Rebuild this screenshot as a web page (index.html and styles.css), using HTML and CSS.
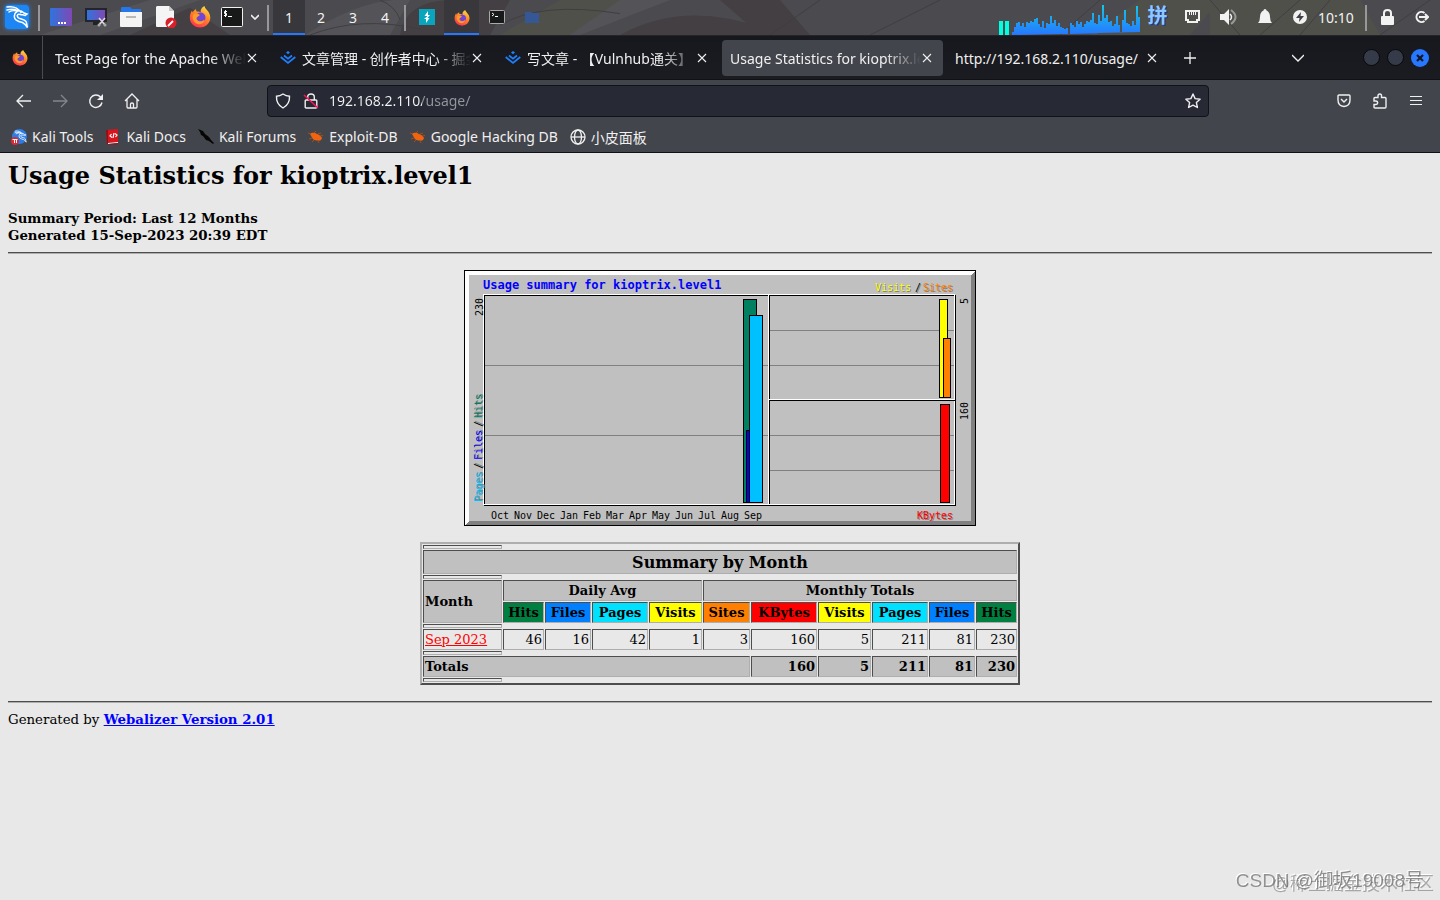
FILE: index.html
```html
<!DOCTYPE html>
<html lang="en">
<head>
<meta charset="utf-8">
<title>Usage Statistics for kioptrix.level1</title>
<link rel="stylesheet" href="styles.css">
</head>
<body>
<svg class="defs" aria-hidden="true">
  <defs>
    <linearGradient id="screen" x1="0" y1="0" x2="1" y2="0"><stop offset="0" stop-color="#2f74dc"/><stop offset="1" stop-color="#8048b4"/></linearGradient>
    <linearGradient id="flame" x1=".8" y1="0" x2=".3" y2="1"><stop offset="0" stop-color="#ffe04a"/><stop offset=".45" stop-color="#ff8a25"/><stop offset="1" stop-color="#ff2f55"/></linearGradient>
    <linearGradient id="load" x1="0" y1="0" x2="0" y2="1"><stop offset="0" stop-color="#14c8e8"/><stop offset="1" stop-color="#2777ff"/></linearGradient>
    <symbol id="firefox" viewBox="0 0 22 22">
      <path fill="url(#flame)" d="M11 21.500C5 21.500.8 17 .8 11.500c0-3 1-5 2.200-7l.6 2c.8-1.500 2-2.600 3.500-3.500-.2 1 0 2 .7 2.600 2 0 3 .4 4 1C11 4 12.500 1.500 15.500 0c0 3 5.700 5 5.800 11.500C21.300 17 17 21.500 11 21.500z"/>
      <circle cx="11.500" cy="11.500" r="5" fill="#7245d8"/>
      <path fill="#ff9b28" d="M4 9c2-2 5-1.500 7 0l-2 1.500c-1 .5-1.500 1-1.500 2.500 1.500 3 6 3 8 .5C15 18 10 19.500 6.500 17 4 15 3 12 4 9z"/>
    </symbol>
    <symbol id="dragon" viewBox="0 0 24 24">
      <path fill="none" stroke="#fff" stroke-width="1.500" stroke-linecap="round" d="M2 2c6-1 11 1 14 5.500M4 7c3-2 6-2 9-.5M2 5c4-1 7-1 10 .5M12 6c2-.5 5 0 7 2l3 1-2 1.500C18 9 17 10 15.500 9.500c-3-1-4 1-2.500 3 2 2 6 1 8 4 1 2 .5 3 1.500 6-2-3-3-4-5-5-5-1-9-3-8-7 0-1.500 1-3 2-3.500"/>
    </symbol>
    <symbol id="juejin" viewBox="0 0 16 14"><path fill="none" stroke="#1e80ff" stroke-width="1.700" d="M.7 6 8 12l7.300-6M4 4.500 8 7.700l4-3.200"/><path fill="#1e80ff" d="m8 0 2 1.600L8 3.300 6 1.600z"/></symbol>
    <symbol id="close" viewBox="0 0 10 10"><path stroke="#f0f0f0" stroke-width="1.100" d="m1 1 8 8m0-8-8 8"/></symbol>
    <symbol id="bug" viewBox="0 0 16 16"><path fill="#f0640f" d="M2 5c2-2 5-1.500 7 0 2 .5 4 2 5 4-.5 2-2 3-4 2.500-3 .5-5-1-6-3z"/><path fill="none" stroke="#b9500f" stroke-width=".8" d="m6 4 2-2m2 3 3-1m-1 3 3-.5M4 9l-3 1m5 1-2 2m6-1 1 2M3 5 0 4"/></symbol>
  </defs>
</svg>

<header class="panel">
  <svg class="wallpaper" viewBox="0 0 1440 36" preserveAspectRatio="none" aria-hidden="true">
    <g fill="#5c5b60"><path d="M40 36 150 0h50L100 36zM305 36q60-40 105-36l-20 36zM520 36l60-36h90l-90 36z"/></g>
    <g fill="#3d3739"><path d="M130 36 190 8l40 28zM400 36q5-35 50-36h60l-20 36zM620 36q70-40 160 0zM720 0h60l30 36h-50z"/></g>
    <g fill="#55554a"><path d="M500 36 560 0h60l-50 36zM1090 36l50-36h80l-30 36zM1210 36V0h150l20 36z"/></g>
    <g fill="none" stroke="#37343a"><path d="M310 36q50-20 110-6M380 0q15 6 20 20M500 26q40-25 120-12M820 0l-50 36M870 36l70-36M1060 36l40-36M1210 0l30 36M1260 36l40-36M1330 0l-30 36M1380 36l50-36"/></g>
  </svg>
  <div class="group">
    <button class="slot kali" aria-label="Applications"><svg width="24" height="24"><rect width="24" height="24" rx="2" fill="#1d86f5"/><use href="#dragon" width="24" height="24"/></svg></button>
    <i class="sep"></i>
    <button class="slot" aria-label="Show desktop"><svg width="22" height="18"><rect width="22" height="18" rx="1" fill="url(#screen)"/><path stroke="#fff" stroke-width="2" stroke-dasharray="2 1" d="M8 15h8"/></svg></button>
    <button class="slot" aria-label="Screenshot"><svg width="22" height="20"><rect width="22" height="14" y="1" fill="#24242c"/><rect x="2" y="3" width="18" height="10" fill="url(#screen)"/><path fill="#222" d="M8 15h6v3H8z"/><path stroke="#ddd" stroke-width="1.500" d="m14 11 6 7m0-7-6 7"/><circle cx="14" cy="18" r="1.500" fill="#aaa"/><circle cx="20" cy="18" r="1.500" fill="#aaa"/></svg></button>
    <button class="slot" aria-label="Files"><svg width="22" height="20"><path fill="#2677ea" d="M1 1q0-1 1-1h8l2 2h9v6H1z"/><path fill="#f4f4f4" d="M0 5h22v14q0 1-1 1H1q-1 0-1-1z"/><rect x="6" y="9" width="10" height="2" fill="#b8b8b8"/></svg></button>
    <button class="slot" aria-label="Text editor"><svg width="22" height="22"><path fill="#f5f5f5" d="M2 0h12l5 5v16H2q-1 0-1-1V1z"/><path fill="#c9c9c9" d="M14 0v5h5z"/><circle cx="16" cy="17" r="5.500" fill="#d8202a"/><path stroke="#fff" stroke-width="1.800" d="m13 20 5-5"/></svg></button>
    <button class="slot ff" aria-label="Firefox"><svg width="22" height="22"><use href="#firefox" width="22" height="22"/></svg></button>
    <button class="slot term" aria-label="Terminal"><svg width="22" height="20"><rect x=".5" y=".5" width="21" height="19" rx="1" fill="#171a19" stroke="#f1f1f1"/><path fill="none" stroke="#fff" d="M6 4.500H3.500v2h2v2H3M4.500 3v7M7 9.500h4"/></svg></button>
    <button class="slot more" aria-label="More"><svg width="8" height="6"><path fill="none" stroke="#eee" stroke-width="1.700" d="m0 1 4 4 4-4"/></svg></button>
    <i class="sep sep-wide"></i>
    <button class="space active">1</button><button class="space">2</button><button class="space">3</button><button class="space">4</button>
    <i class="sep sep-thin"></i>
    <button class="slot" aria-label="Burp Suite"><svg width="16" height="16"><path fill="#08a5bd" d="M0 0h16v16H0z"/><path fill="#fff" d="M9 2v4h2L8 9.500V7H5.500zM7 14v-4H5l3-2.500V9h2.500z"/></svg></button>
    <button class="slot active" aria-label="Firefox window"><svg width="16" height="16"><use href="#firefox" width="16" height="16"/></svg></button>
    <button class="slot" aria-label="Terminal window"><svg width="16" height="14"><rect x=".5" y=".5" width="15" height="13" rx="1" fill="#171a19" stroke="#aaa"/><path stroke="#fff" d="m3 3 2 1.500L3 6m3 .5h3"/></svg></button>
    <button class="slot" aria-label="Files window"><svg width="14" height="11"><path fill="#355796" d="M0 0h6l1 1h7v10H0z"/></svg></button>
  </div>
  <div class="group tray">
    <svg class="graph" width="141" height="36" aria-label="CPU load"><path fill="#00ffe1" d="M0 21h4v14H0zM6 21h4v14H6z"/><path fill="url(#load)" d="M13 35v-3h2v-5h2v-4h2v-1h2v4h2v-3h2v4h2v-5h2v1h2v-2h2v1h2v-3h2v-1h2v6h2v3h2v-6h2v7h2v-5h2v1h2v-8h2v7h2v-3h2v6h2v-3h2v4h2v1h2v1h2v-1h2v6h2v-11h2v2h2v2h2v-6h2v3h2v-2h2v5h2v-3h2v-3h2v1h2v-2h2v-7h2v10h2v1h2v-9h2v6h2v-16h2v13h2v-3h2v7h2v-1h2v5h2v-2h2v-8h2v9h2v7h2v-12h2v-10h2v13h2v1h2v2h2v-5h2v4h2v-19h2v11h2v-4h2v5h2v-2h1v16z"/></svg>
    <button class="slot ime">拼</button>
    <button class="slot" aria-label="Network"><svg width="15" height="14"><path fill="none" stroke="#f2f2f2" stroke-width="2" d="M1 1h13v9h-2v2H3v-2H1z"/><path stroke="#f2f2f2" d="M4.500 2v3m2-3v3m2-3v3m2-3v3"/></svg></button>
    <button class="slot vol" aria-label="Volume"><svg width="18" height="16"><path fill="#f2f2f2" d="M0 5h4l5-5v16l-5-5H0z"/><path fill="none" stroke="#f2f2f2" stroke-width="1.500" d="M10 5q3 3 0 6"/><path fill="none" stroke="#999" stroke-width="2" d="M11 1q9 7 0 14"/></svg></button>
    <button class="slot" aria-label="Notifications"><svg width="14" height="16"><path fill="#f2f2f2" d="M7 0q1.500 0 1.500 1.500Q12 3 12 8q0 4 2 6H0q2-2 2-6 0-5 3.500-6.500Q5.500 0 7 0z"/></svg></button>
    <button class="slot power" aria-label="Power"><svg width="14" height="14"><circle cx="7" cy="7" r="7" fill="#f2f2f2"/><path fill="#414044" d="M8 2 3 8h3.500L6 12l5-6H7.500z"/></svg></button>
    <time class="clock">10:10</time>
    <i class="sep sep-clock"></i>
    <button class="slot lock" aria-label="Lock"><svg width="13" height="16"><path fill="none" stroke="#f2f2f2" stroke-width="2" d="M3 8V4q0-3 3.500-3T10 4v4"/><rect y="7" width="13" height="9" rx="1" fill="#f2f2f2"/></svg></button>
    <button class="slot" aria-label="Log out"><svg width="15" height="14"><path fill="none" stroke="#f2f2f2" stroke-width="2" d="M10.500 3A5 5 0 1 0 10.500 11M5 7h8M11 4l3 3-3 3"/></svg></button>
  </div>
</header>

<nav class="tabs" aria-label="Tabs">
  <button class="pinned" aria-label="Pinned tab"><svg width="16" height="16"><use href="#firefox" width="16" height="16"/></svg></button>
  <div class="tab"><span class="tab-title">Test Page for the Apache Web Server</span><button aria-label="Close"><svg width="10" height="10"><use href="#close"/></svg></button></div>
  <div class="tab"><svg width="16" height="14"><use href="#juejin"/></svg><span class="tab-title">文章管理 - 创作者中心 - 掘金</span><button aria-label="Close"><svg width="10" height="10"><use href="#close"/></svg></button></div>
  <div class="tab"><svg width="16" height="14"><use href="#juejin"/></svg><span class="tab-title">写文章 - 【Vulnhub通关】</span><button aria-label="Close"><svg width="10" height="10"><use href="#close"/></svg></button></div>
  <div class="tab current"><span class="tab-title">Usage Statistics for kioptrix.level1</span><button aria-label="Close"><svg width="10" height="10"><use href="#close"/></svg></button></div>
  <div class="tab"><span class="tab-title whole">http://192.168.2.110/usage/</span><button aria-label="Close"><svg width="10" height="10"><use href="#close"/></svg></button></div>
  <button class="plus" aria-label="New tab"><svg width="12" height="12"><path stroke="#f0f0f0" stroke-width="1.300" d="M6 0v12M0 6h12"/></svg></button>
  <button class="list" aria-label="List all tabs"><svg width="12" height="8"><path fill="none" stroke="#f0f0f0" stroke-width="1.300" d="m0 1 6 6 6-6"/></svg></button>
  <div class="window">
    <button aria-label="Minimize"></button><button aria-label="Maximize"></button><button class="shut" aria-label="Close window"><svg width="8" height="8"><path stroke="#101722" stroke-width="2.200" d="m1 1 6 6m0-6-6 6"/></svg></button>
  </div>
</nav>

<div class="toolbar">
  <button aria-label="Back"><svg width="16" height="14"><path fill="none" stroke="#f0f0f0" stroke-width="1.300" d="M15 7H1m6-6L1 7l6 6"/></svg></button>
  <button aria-label="Forward"><svg width="16" height="14"><path fill="none" stroke="#85868b" stroke-width="1.300" d="M1 7h14M9 1l6 6-6 6"/></svg></button>
  <button aria-label="Reload"><svg width="16" height="16"><path fill="none" stroke="#f0f0f0" stroke-width="1.400" d="M14 9.500A6.200 6.200 0 1 1 12.500 4"/><path fill="#f0f0f0" d="M15 1v6H9z"/></svg></button>
  <button aria-label="Home"><svg width="16" height="16"><path fill="none" stroke="#f0f0f0" stroke-width="1.300" d="M1 8l7-7 7 7M3 6.500V14q0 1 1 1h8q1 0 1-1V6.500M6.500 15v-4q0-1 1.500-1t1.500 1v4"/></svg></button>
  <div class="address">
    <svg width="16" height="16"><path fill="none" stroke="#f0f0f0" stroke-width="1.400" d="M8 1q3 2 6.500 2.200Q15 11 8 15 1 11 1.500 3.200 5 3 8 1z"/></svg>
    <svg width="16" height="16"><path fill="none" stroke="#f0f0f0" stroke-width="1.400" d="M4.700 7V4q0-3 3.300-3t3.300 3v3M3 7h10q.8 0 .8.800V14q0 1-1 1H3.200q-1 0-1-1V7.800Q2.200 7 3 7z"/><path stroke="#fb1455" stroke-width="1.600" d="m1 2 14 13"/></svg>
    <input type="text" aria-label="Address" value="192.168.2.110/usage/">
    <button aria-label="Bookmark this page"><svg width="16" height="16"><path fill="none" stroke="#f0f0f0" stroke-width="1.400" stroke-linejoin="round" d="m8 1 2.100 4.600 5 .6-3.700 3.400 1 4.900L8 12.100l-4.400 2.400 1-4.900L.9 6.200l5-.6z"/></svg></button>
  </div>
  <button aria-label="Pocket"><svg width="14" height="14"><path fill="none" stroke="#f0f0f0" stroke-width="1.400" d="M2 1h10q1 0 1 1v4q0 6-6 6.500Q1 12 1 6V2q0-1 1-1zM4 5l3 3 3-3"/></svg></button>
  <button aria-label="Extensions"><svg width="16" height="16"><path fill="none" stroke="#f0f0f0" stroke-width="1.400" d="M6 4.500V3q0-2 1.800-2T9.500 3v1.500H13q1 0 1 1V14q0 1-1 1H3q-1 0-1-1v-2.500h2q1.700-.2 1.700-1.700T4 8H2V5.500q0-1 1-1z"/></svg></button>
  <button aria-label="Menu"><svg width="12" height="12"><path stroke="#f0f0f0" d="M0 1.500h12M0 5.500h12M0 9.500h12"/></svg></button>
</div>

<nav class="bookmarks" aria-label="Bookmarks">
  <a href="#"><svg width="16" height="16"><circle cx="8.500" cy="7.500" r="7.500" fill="#2a7de6"/><use href="#dragon" x="3" y="1" width="13" height="13"/><circle cx="4" cy="12" r="4" fill="#d62c34"/><path stroke="#fff" d="M1.500 10.500h5M3.500 10v4m2-4v4"/></svg>Kali Tools</a>
  <a href="#"><svg width="16" height="16"><path fill="#d8141c" d="M1 1 13 0v13L2 14z"/><path fill="#8c1016" d="M1 1h2v14H2z"/><path fill="#fff" d="m3 14 10-1v1L3 15z"/><path fill="#a01018" d="m3 15 10-1v1.500H3z"/><path fill="none" stroke="#fff" stroke-width="1.200" d="M6.500 5 5 7l2 1.500M10 4.500l2 1.500-1.500 2M9 4l-1 5"/></svg>Kali Docs</a>
  <a href="#"><svg width="16" height="16"><path fill="#050505" d="M0 0 5 2l2 3 4 3 2 3 3 3-1 1-4-3-3-1-3-4-2-1-1-3z"/></svg>Kali Forums</a>
  <a href="#"><svg width="16" height="16"><use href="#bug"/></svg>Exploit-DB</a>
  <a href="#"><svg width="16" height="16"><use href="#bug"/></svg>Google Hacking DB</a>
  <a href="#"><svg width="16" height="16"><g fill="none" stroke="#f0f0f0" stroke-width="1.300"><circle cx="8" cy="8" r="7"/><ellipse cx="8" cy="8" rx="3.500" ry="7"/><path d="M1 8h14"/></g></svg>小皮面板</a>
</nav>

<main class="page">
  <h2>Usage Statistics for kioptrix.level1</h2>
  <p class="period"><strong>Summary Period: Last 12 Months<br>Generated 15-Sep-2023 20:39 EDT</strong></p>
  <hr>
  <svg class="chart" width="512" height="256" shape-rendering="crispEdges" role="img" aria-label="Usage summary for kioptrix.level1">
    <path d="M0 0h512v256H0z"/><path fill="#fff" d="M1 1h510v254H1z"/><path fill="#808080" d="M511 1v254H1l4-4h502V5z"/><path fill="#c0c0c0" d="M5 5h502v246H5z"/>
    <path stroke="#808080" d="M21 95.500h283M21 165.500h283M306 60.500h184M306 95.500h184M306 165.500h184M306 200.500h184"/>
    <path fill="none" stroke="#000" d="M20.500 25.500h471v210h-471zM305.500 25.500v210M305.500 130.500h186"/>
    <path fill="none" stroke="#fff" d="M19.500 24.500h471v210h-471zM304.500 24.500v210M304.500 129.500h186"/>
    <path stroke="#000" d="M20.500 25v209M20 25.500h284M305.500 25v104M305 25.500h185M305.500 130v104M305 130.500h186"/>
    <g stroke="#000">
      <path fill="#008060" d="M279.500 29.500h13v203h-13z"/><path fill="#00f" d="M282.500 160.500h13v72h-13z"/><path fill="#00c0ff" d="M285.500 45.500h13v187h-13z"/>
      <path fill="#ff0" d="M475.500 29.500h8v98h-8z"/><path fill="#ff8000" d="M479.500 68.500h7v59h-7z"/><path fill="red" d="M476.500 134.500h9v98h-9z"/>
    </g>
    <text class="chart-title" x="19" y="19">Usage summary for kioptrix.level1</text>
    <g class="legend">
      <text x="411" y="21" fill="#ff0">Visits</text><text x="451" y="21">/</text><text x="459" y="21" fill="#ff8000">Sites</text>
      <text x="453" y="249" fill="red">KBytes</text>
      <g transform="rotate(-90)"><text x="-232" y="18" fill="#00c0ff">Pages</text><text x="-199" y="18">/</text><text x="-190" y="18" fill="#00f">Files</text><text x="-157" y="18">/</text><text x="-148" y="18" fill="#008060">Hits</text></g>
    </g>
    <g class="scale">
      <g transform="rotate(-90)"><text x="-46" y="19">230</text><text x="-34" y="504">5</text><text x="-150" y="504">160</text></g>
      <text x="27" y="249">Oct</text><text x="50" y="249">Nov</text><text x="73" y="249">Dec</text><text x="96" y="249">Jan</text><text x="119" y="249">Feb</text><text x="142" y="249">Mar</text><text x="165" y="249">Apr</text><text x="188" y="249">May</text><text x="211" y="249">Jun</text><text x="234" y="249">Jul</text><text x="257" y="249">Aug</text><text x="280" y="249">Sep</text>
    </g>
  </svg>
  <table class="summary">
    <colgroup><col class="c79"><col class="c41"><col class="c46"><col class="c56"><col class="c53"><col class="c47"><col class="c66"><col class="c53"><col class="c56"><col class="c46"><col class="c41"></colgroup>
    <tbody>
      <tr class="rule"><td></td></tr>
      <tr class="head"><th class="caption" colspan="11">Summary by Month</th></tr>
      <tr class="rule"><td></td></tr>
      <tr class="head"><th class="left" rowspan="2">Month</th><th colspan="4">Daily Avg</th><th colspan="6">Monthly Totals</th></tr>
      <tr class="head"><th class="hits">Hits</th><th class="files">Files</th><th class="pages">Pages</th><th class="visits">Visits</th><th class="sites">Sites</th><th class="kbytes">KBytes</th><th class="visits">Visits</th><th class="pages">Pages</th><th class="files">Files</th><th class="hits">Hits</th></tr>
      <tr class="rule"><td></td></tr>
      <tr><td class="left"><a href="#">Sep 2023</a></td><td>46</td><td>16</td><td>42</td><td>1</td><td>3</td><td>160</td><td>5</td><td>211</td><td>81</td><td>230</td></tr>
      <tr class="rule"><td></td></tr>
      <tr class="head total"><th class="left" colspan="6">Totals</th><td>160</td><td>5</td><td>211</td><td>81</td><td>230</td></tr>
      <tr class="rule"><td></td></tr>
    </tbody>
  </table>
  <hr>
  <p class="credit">Generated by <a href="#">Webalizer Version 2.01</a></p>
</main>
<div class="mark mark-back">@稀土掘金技术社区</div>
<div class="mark">CSDN @御坂19008号</div>
</body>
</html>
```
FILE: styles.css
```css
* { box-sizing: border-box; }
body {
  margin: 0;
  min-height: 100vh;
  background: #e8e8e8;
  color: #000;
  font-family: "Noto Sans", "Noto Sans CJK SC", sans-serif;
  font-size: 14px;
}
button {
  display: flex;
  align-items: center;
  justify-content: center;
  padding: 0;
  border: 0;
  background: none;
  color: inherit;
  font: inherit;
}
svg { flex: none; display: block; }
.defs { position: absolute; width: 0; height: 0; }

/* desktop panel */
.panel {
  position: relative;
  display: flex;
  justify-content: space-between;
  height: 36px;
  overflow: hidden;
  border-bottom: 1px solid #252529;
  background: #4b4a4e;
  color: #f2f2f2;
}
.wallpaper { position: absolute; width: 100%; height: 100%; opacity: .55; }
.group { position: relative; display: flex; }
.tray { padding-right: 1px; }
.slot { width: 35px; height: 34px; }
.slot.kali, .slot.ff, .slot.lock { width: 34px; }
.slot.term { width: 30px; }
.slot.more { width: 15px; }
.slot.vol { width: 37px; }
.slot.power { width: 36px; }
.kali svg { border-radius: 3px; box-shadow: 0 0 4px #1d86f5; }
.sep { display: flex; justify-content: center; align-items: center; width: 9px; }
.sep::before { content: ""; width: 2px; height: 26px; background: #98979a; }
.sep-wide { width: 11px; }
.sep-thin { width: 8px; }
.sep-clock { width: 16px; justify-content: flex-end; padding-right: 3px; }
.space { width: 32px; height: 35px; }
.panel .active { height: 35px; background: #38373c; border-bottom: 2px solid #2777ff; padding-top: 2px; }
.ime { color: #8fc8ff; font-size: 20px; font-weight: 700; line-height: 24px; text-shadow: 1px 1px 0 #1238a8; padding-bottom: 3px; }
.clock { width: 36px; text-align: center; line-height: 35px; white-space: nowrap; }

/* tab strip */
.tabs {
  display: flex;
  align-items: center;
  height: 44px;
  border-bottom: 1px solid #101115;
  background: linear-gradient(#17181d, #1b1c21);
  color: #f0f0f0;
}
.pinned { width: 43px; height: 43px; padding-right: 2px; margin-right: 4px; border-right: 1px solid #4b4c51; }
.tab {
  display: flex;
  align-items: center;
  flex: 0 1 221px;
  min-width: 0;
  height: 36px;
  margin-right: 4px;
  padding: 0 10px 0 8px;
  border-radius: 4px;
}
.tab > svg { margin-right: 6px; }
.tab > button { width: 12px; height: 20px; }
.tab-title {
  flex: 1;
  overflow: hidden;
  padding-top: 2px;
  line-height: 24px;
  white-space: nowrap;
  mask-image: linear-gradient(to left, transparent, #000 36px);
}
.tab-title.whole { mask-image: none; }
.current { background: #43454c; }
.plus { width: 36px; height: 36px; }
.list { width: 36px; height: 36px; margin-left: auto; margin-right: 47px; }
.window { display: flex; align-items: center; gap: 7px; padding-right: 11px; }
.window button { width: 17px; height: 17px; border: 1px solid #07080a; border-radius: 50%; background: #363b49; }
.window .shut { width: 18px; height: 18px; border: 0; background: #2777ff; }

/* navigation */
.toolbar { display: flex; align-items: center; height: 41px; padding: 0 6px; background: #43454c; }
.toolbar > button { width: 36px; height: 36px; }
.address {
  display: flex;
  align-items: center;
  gap: 12px;
  flex: 1;
  height: 32px;
  margin: 0 117px;
  padding: 0 7px;
  border: 1px solid #101216;
  border-radius: 4px;
  background: #272935;
}
.address input {
  flex: 1;
  min-width: 0;
  height: 28px;
  margin-left: -2px;
  padding: 0;
  border: 0;
  outline: 0;
  font: inherit;
  color: transparent;
  background: linear-gradient(to right, #f4f4f4 93px, #95969d 93px);
  background-clip: text;
  -webkit-background-clip: text;
}
.bookmarks {
  display: flex;
  align-items: center;
  gap: 12px;
  height: 32px;
  padding: 0 11px;
  border-bottom: 1px solid #101115;
  background: #43454c;
}
.bookmarks a { display: flex; align-items: center; gap: 5px; color: #f0f0f0; text-decoration: none; white-space: nowrap; }

/* report */
.page { padding: 9px 8px 8px; font-family: "DejaVu Serif", serif; font-size: 16px; line-height: 17px; }
.page h2 { margin: 0 0 20px; font-size: 24px; line-height: 28px; }
.page p { margin: 0; font-size: smaller; }
.page hr { margin: 8px 0; border: 0; border-top: 1px solid #4d4d4d; border-bottom: 1px solid #aeaeae; }
.chart { margin: 16px auto; }
.chart text { font-family: "DejaVu Sans Mono", monospace; font-size: 10px; }
.chart .chart-title { fill: #00f; font-size: 12px; font-weight: 700; }
.legend text { text-shadow: 1px 1px 0 #808080; }
.summary {
  width: 600px;
  margin: 16px auto;
  table-layout: fixed;
  border: 2px solid;
  border-color: #aeaeae #4d4d4d #4d4d4d #aeaeae;
  border-spacing: 1px;
  font-size: 13px;
}
.summary th, .summary td {
  padding: 1px;
  border: 1px solid;
  border-color: #4d4d4d #aeaeae #aeaeae #4d4d4d;
  text-align: right;
}
.summary th { text-align: center; }
.summary .left { text-align: left; }
.summary .rule td { height: 4px; }
.head th, .head td { background: #c0c0c0; }
.summary .caption { padding: 2px 1px 0; font-size: 16px; line-height: 20px; }
.total td { font-weight: 700; }
.summary a { color: red; }
.head .hits { background: #008040; }
.head .files { background: #0080ff; }
.head .pages { background: #00e0ff; }
.head .visits { background: #ff0; }
.head .sites { background: #ff8000; }
.head .kbytes { background: red; }
.c79 { width: 79px; }
.c41 { width: 41px; }
.c46 { width: 46px; }
.c56 { width: 56px; }
.c53 { width: 53px; }
.c47 { width: 47px; }
.c66 { width: 66px; }
.credit a { color: #00f; font-weight: 700; }

.mark {
  position: fixed;
  right: 16px;
  bottom: 6px;
  color: #666666b3;
  font: 19px/26px "Liberation Sans", "Noto Sans CJK SC", sans-serif;
  text-shadow: -1px -1px 0 #fff;
  white-space: nowrap;
}
.mark-back { right: 6px; bottom: 3px; color: #77777799; font-size: 18px; }
```
